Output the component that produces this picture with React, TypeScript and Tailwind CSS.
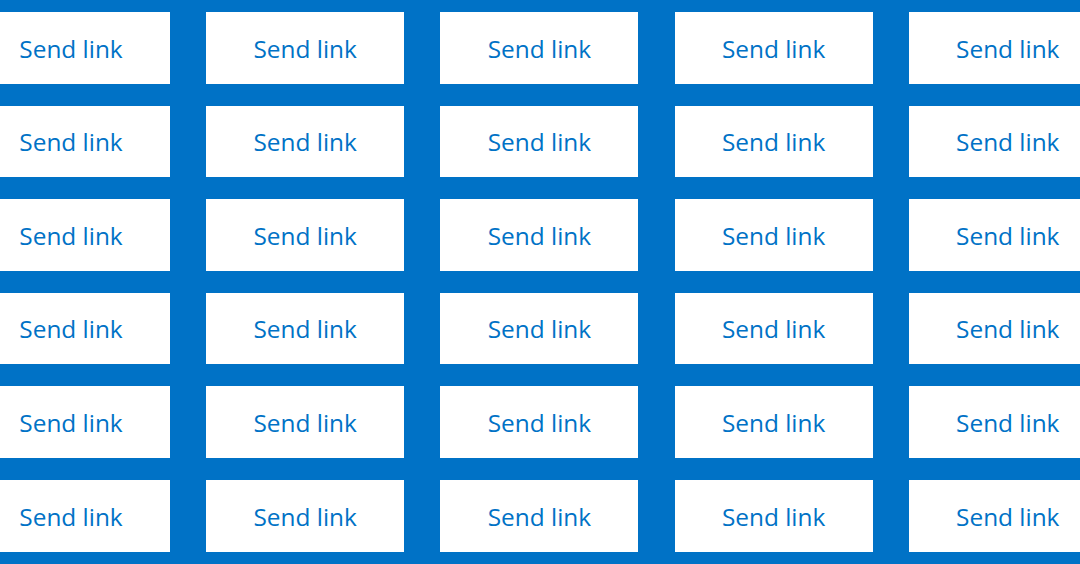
import React from 'react';

const ROWS = 6;
const COLS = 5;

export default function App() {
    const cells = Array.from({ length: ROWS * COLS }, (_, i) => i);

    return (
        <div className="w-[1080px] h-[564px] overflow-hidden bg-[#0072c6] pt-[12px]" style={{ fontFamily: '"Open Sans", "Noto Sans", sans-serif' }}>
            <div className="-ml-[28px] grid grid-cols-[repeat(5,198px)] gap-x-[36.2px] gap-y-[22px] w-max">
                {cells.map((i) => (
                    <button
                        key={i}
                        className="h-[71.6px] bg-white flex items-center justify-center pt-[2px] text-[24.4px] text-[#0072c6] leading-none"
                    >
                        Send link
                    </button>
                ))}
            </div>
        </div>
    );
}
